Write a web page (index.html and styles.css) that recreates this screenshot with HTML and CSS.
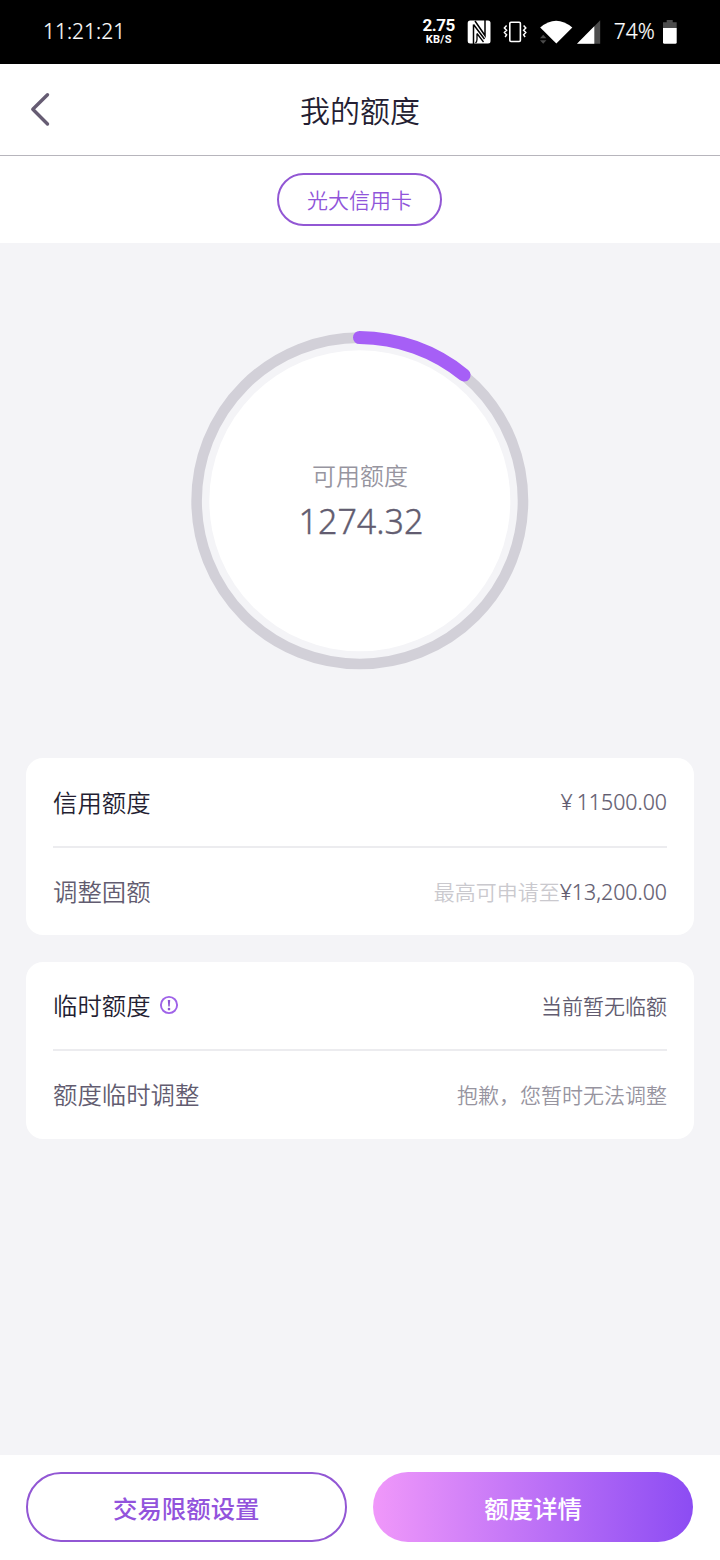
FILE: index.html
```
<!DOCTYPE html>
<html lang="zh-CN">
<head>
<meta charset="utf-8">
<title>我的额度</title>
<link rel="stylesheet" href="styles.css">
</head>
<body>
<div class="screen">
  <div class="status">
    <span class="time">11:21:21</span>
    <div class="speed"><b>2.75</b><small>KB/S</small></div>
    <svg class="tray" width="135" height="26" viewBox="467 19 135 26">
      <rect x="467.7" y="20.5" width="22.8" height="23" rx="2.5" fill="#fff"/>
      <path d="M473.5 44V24.5M475 21L485 35.500V20M473.500 24.500L484.500 39" fill="none" stroke="#000" stroke-width="1.500"/>
      <path d="M477 33.500V39.500Q477 41.500 475.500 43M477 33.500L483.500 42" fill="none" stroke="#000" stroke-width="1.300"/>
      <rect x="509.800" y="22.300" width="10.600" height="19.200" rx="1.200" fill="none" stroke="#fff" stroke-width="1.600"/>
      <path d="M506.600 25.500l-2.200 2.400 2.200 2.300-2.200 2.300 2.200 2.300-1.500 2.200M523.600 25.500l2.200 2.400-2.200 2.300 2.200 2.300-2.200 2.300 1.500 2.200" fill="none" stroke="#fff" stroke-width="1.500"/>
      <path d="M540.200 27.500Q556 14 572.300 27.500L556.300 43.600Z" fill="#fff"/>
      <path d="M540 38.300l3.200-3.600 3.200 3.600zM540 40.200l3.200 3.600 3.200-3.600z" fill="#4a4a4a"/>
      <path d="M600.200 20.300V43.800H577z" fill="#4c4c4c"/>
      <path d="M594.300 26.300V43.800H577z" fill="#fff"/>
    </svg>
    <span class="percent">74%</span>
    <svg class="battery" width="14" height="24" viewBox="0 0 14 24">
      <path d="M0 8V2.300h3.700V0h6v2.300h4V8z" fill="#4c4c4c"/>
      <path d="M0 8h13.700v14.400q0 1.400-1.400 1.400H1.400Q0 23.800 0 22.400z" fill="#fff"/>
    </svg>
  </div>

  <header class="nav">
    <svg class="back" width="24" height="36" viewBox="0 0 24 36"><path d="M19.500 2.700L4.800 17.300 19.500 32" fill="none" stroke="#665c73" stroke-width="3.400" stroke-linecap="round" stroke-linejoin="round"/></svg>
    <h1>我的额度</h1>
  </header>

  <div class="tabs"><div class="tab">光大信用卡</div></div>

  <main>
    <div class="gauge">
      <svg class="ring" width="340" height="340" viewBox="0 0 340 340">
        <circle cx="169.800" cy="170.800" r="163.200" fill="none" stroke="#d2d0d8" stroke-width="10.600"/>
        <circle cx="169.800" cy="170.800" r="150.500" fill="#fff"/>
        <path d="M169.600 7.500A167 167 0 0 1 274 45" fill="none" stroke="#a65ff6" stroke-width="13.200" stroke-linecap="round"/>
      </svg>
      <div class="reading"><span class="caption">可用额度</span><span class="amount">1274.32</span></div>
    </div>

    <section class="card">
      <div class="row"><span class="label dark">信用额度</span><span class="value number"><span class="yen">¥</span>11500.00</span></div>
      <div class="row"><span class="label">调整固额</span><span class="value"><span class="hint">最高可申请至</span><span class="number">¥13,200.00</span></span></div>
    </section>
    <section class="card temporary">
      <div class="row"><span class="label dark">临时额度</span>
        <svg class="info" width="20" height="20" viewBox="0 0 20 20"><circle cx="10" cy="10" r="8.100" fill="none" stroke="#9f62e8" stroke-width="1.900"/><path d="M8.800 5h2.400l-.5 6.600H9.300z" fill="#8f56d4"/><circle cx="10" cy="14.100" r="1.300" fill="#8f56d4"/></svg>
        <span class="value">当前暂无临额</span></div>
      <div class="row"><span class="label">额度临时调整</span><span class="value muted">抱歉，您暂时无法调整</span></div>
    </section>
  </main>

  <footer>
    <div class="btn outline">交易限额设置</div>
    <div class="btn filled">额度详情</div>
  </footer>
</div>
</body>
</html>
```
FILE: styles.css
```
* { box-sizing: border-box; }
body { margin: 0; font-family: "Noto Sans", "Noto Sans CJK SC", sans-serif; font-weight: 350; color: #625c70; }
svg { display: block; flex: none; }
.screen { width: 720px; height: 1560px; display: flex; flex-direction: column; background: #f4f4f7; }

.status { height: 64px; flex: none; background: #000; color: #fff; display: flex; align-items: center; padding: 0 43px; }
.time { font-size: 21px; line-height: 30px; flex: 1; margin-top: -2px; -webkit-text-stroke: .2px; }
.speed { width: 34px; display: flex; flex-direction: column; align-items: center; font-family: Roboto, sans-serif; font-weight: 700; margin-right: 11px; margin-top: -3px; }
.speed b { font-size: 17px; font-weight: 700; line-height: 17px; letter-spacing: -.5px; }
.speed small { font-size: 11px; line-height: 11px; letter-spacing: .3px; }
.percent { font-size: 21px; line-height: 30px; width: 42px; margin: -2px 7.3px 0 12px; -webkit-text-stroke: .2px; }

.nav { height: 92px; flex: none; background: #fff; border-bottom: 1px solid #b7b5bc; display: grid; grid-template-columns: 60px 1fr 60px; align-items: center; }
.back { margin-left: 28px; }
.nav h1 { margin: 2px 0 0; text-align: center; font-size: 30px; line-height: 44px; font-weight: 350; color: #241e32; }

.tabs { height: 87px; flex: none; background: #fff; display: flex; justify-content: center; align-items: center; }
.tab { width: 165px; height: 53px; border: 2px solid #9257d4; border-radius: 27px; color: #9055da; font-size: 21px; line-height: 50px; text-align: center; margin-right: 1px; }

main { flex: 1; padding: 87px 26px 0; }
.gauge { width: 340px; height: 340px; margin: 0 auto 88px; display: grid; }
.ring, .reading { grid-area: 1 / 1; }
.reading { z-index: 1; display: flex; flex-direction: column; align-items: center; padding-top: 129px; }
.caption { font-size: 24px; line-height: 34px; color: #97959f; }
.amount { font-size: 34px; line-height: 46px; margin: 5px 0 0 2px; -webkit-text-stroke: .4px; }

.card { height: 177px; margin-bottom: 27px; padding: 0 27px; background: #fff; border-radius: 17px; }
.row { height: 88px; padding-top: 1px; display: flex; align-items: center; }
.row + .row { height: 89px; padding-top: 0; border-top: 2px solid #ececef; }
.temporary .row { height: 87px; }
.temporary .row + .row { height: 90px; }
.label { font-size: 24.4px; line-height: 36px; }
.dark { color: #241e32; }
.value { margin-left: auto; font-size: 21px; line-height: 32px; }
.number { font-size: 21.3px; -webkit-text-stroke: .2px; }
.row > .number { margin-top: -2px; }
.yen { margin-right: 4px; }
.hint { color: #cac9ce; }
.muted { color: #97949f; }
.info { margin: -2px 0 0 8px; }

footer { height: 105px; flex: none; background: #fff; padding: 17px 26px 18px; display: flex; gap: 27px; }
.btn { width: 320.5px; flex: none; border-radius: 35px; text-align: center; font-size: 24.4px; line-height: 73px; font-weight: 500; }
.outline { border: 2px solid #9257d4; color: #9253dc; line-height: 69px; }
.filled { margin-left: -.6px; color: #fff; background: linear-gradient(90deg, #f098fa, #8c4cf3); }
```
